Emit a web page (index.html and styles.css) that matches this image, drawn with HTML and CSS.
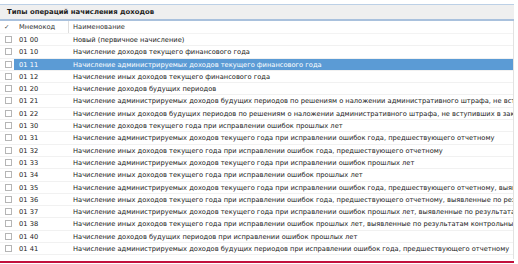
FILE: index.html
```html
<!DOCTYPE html>
<html lang="ru">
<head>
<meta charset="utf-8">
<link rel="stylesheet" href="styles.css">
</head>
<body>
<div class="panel">
  <div class="title">Типы операций начисления доходов</div>
  <div class="grid">
    <div class="row head">
      <div class="c-chk"><span class="tick">✓</span></div>
      <div class="c-code">Мнемокод</div>
      <div class="c-name">Наименование</div>
    </div>
    <div class="row"><div class="c-chk"><span class="box"></span></div><div class="c-code">01 00</div><div class="c-name">Новый (первичное начисление)</div></div>
    <div class="row"><div class="c-chk"><span class="box"></span></div><div class="c-code">01 10</div><div class="c-name">Начисление доходов текущего финансового года</div></div>
    <div class="row sel"><div class="c-chk"><span class="box"></span></div><div class="c-code">01 11</div><div class="c-name">Начисление администрируемых доходов текущего финансового года</div></div>
    <div class="row"><div class="c-chk"><span class="box"></span></div><div class="c-code">01 12</div><div class="c-name">Начисление иных доходов текущего финансового года</div></div>
    <div class="row"><div class="c-chk"><span class="box"></span></div><div class="c-code">01 20</div><div class="c-name">Начисление доходов будущих периодов</div></div>
    <div class="row"><div class="c-chk"><span class="box"></span></div><div class="c-code">01 21</div><div class="c-name">Начисление администрируемых доходов будущих периодов по решениям о наложении административного штрафа, не вступивших в законную силу</div></div>
    <div class="row"><div class="c-chk"><span class="box"></span></div><div class="c-code">01 22</div><div class="c-name">Начисление иных доходов будущих периодов по решениям о наложении административного штрафа, не вступивших в законную силу</div></div>
    <div class="row"><div class="c-chk"><span class="box"></span></div><div class="c-code">01 30</div><div class="c-name">Начисление доходов текущего года при исправлении ошибок прошлых лет</div></div>
    <div class="row"><div class="c-chk"><span class="box"></span></div><div class="c-code">01 31</div><div class="c-name">Начисление администрируемых доходов текущего года при исправлении ошибок года, предшествующего отчетному</div></div>
    <div class="row"><div class="c-chk"><span class="box"></span></div><div class="c-code">01 32</div><div class="c-name">Начисление иных доходов текущего года при исправлении ошибок года, предшествующего отчетному</div></div>
    <div class="row"><div class="c-chk"><span class="box"></span></div><div class="c-code">01 33</div><div class="c-name">Начисление администрируемых доходов текущего года при исправлении ошибок прошлых лет</div></div>
    <div class="row"><div class="c-chk"><span class="box"></span></div><div class="c-code">01 34</div><div class="c-name">Начисление иных доходов текущего года при исправлении ошибок прошлых лет</div></div>
    <div class="row"><div class="c-chk"><span class="box"></span></div><div class="c-code">01 35</div><div class="c-name">Начисление администрируемых доходов текущего года при исправлении ошибок года, предшествующего отчетному, выявленные по результатам контрольных мероприятий</div></div>
    <div class="row"><div class="c-chk"><span class="box"></span></div><div class="c-code">01 36</div><div class="c-name">Начисление иных доходов текущего года при исправлении ошибок года, предшествующего отчетному, выявленные по результатам контрольных мероприятий</div></div>
    <div class="row"><div class="c-chk"><span class="box"></span></div><div class="c-code">01 37</div><div class="c-name">Начисление администрируемых доходов текущего года при исправлении ошибок прошлых лет, выявленные по результатам контрольных мероприятий</div></div>
    <div class="row"><div class="c-chk"><span class="box"></span></div><div class="c-code">01 38</div><div class="c-name">Начисление иных доходов текущего года при исправлении ошибок прошлых лет, выявленные по результатам контрольных мероприятий</div></div>
    <div class="row"><div class="c-chk"><span class="box"></span></div><div class="c-code">01 40</div><div class="c-name">Начисление доходов будущих периодов при исправлении ошибок прошлых лет</div></div>
    <div class="row"><div class="c-chk"><span class="box"></span></div><div class="c-code">01 41</div><div class="c-name">Начисление администрируемых доходов будущих периодов при исправлении ошибок года, предшествующего отчетному</div></div>
  </div>
  <div class="footer-line"></div>
</div>
</body>
</html>
```

FILE: styles.css
```css
html, body {
  margin: 0;
  padding: 0;
  background: #ffffff;
}

body {
  font-family: "DejaVu Sans", "Liberation Sans", sans-serif;
  font-size: 6.7px;
  color: #222222;
}

.panel {
  width: 514px;
  padding-top: 4px;
}

.title {
  height: 14px;
  line-height: 14px;
  border-top: 1px solid #bcd0e6;
  border-bottom: 2px solid #a9c1dd;
  background: #efefef;
  padding-left: 7px;
  font-weight: bold;
  color: #1e1e1e;
  font-size: 6.9px;
}

.grid {
  border-right: 1px solid #e2e2e2;
  height: 238px;
  overflow: hidden;
}

.row {
  display: grid;
  grid-template-columns: 14px 55px 1fr;
  height: 12.3px;
  line-height: 12px;
  border-bottom: 1px solid #f1f1f1;
  box-sizing: border-box;
  white-space: nowrap;
}

.row.head {
  height: 13px;
  line-height: 13px;
  border-bottom: 1px solid #f3f3f3;
  color: #333333;
}

.row.head .c-code {
  border-right: 1px solid #dedede;
}

.c-chk {
  overflow: hidden;
}

.c-code {
  padding-left: 5px;
  overflow: hidden;
}

.c-name {
  padding-left: 4px;
  overflow: hidden;
}

.tick {
  display: block;
  padding-left: 4px;
  font-size: 6.5px;
  color: #444444;
}

.box {
  display: block;
  width: 7px;
  height: 7px;
  margin: 2px 0 0 5px;
  border: 1px solid #b5b5b5;
  background: #ffffff;
  box-sizing: border-box;
}

.row.sel .c-code,
.row.sel .c-name {
  background: #5b9bd5;
  color: #ffffff;
}

.footer-line {
  margin-top: 2px;
  height: 2px;
  background: #c2103c;
}
```
